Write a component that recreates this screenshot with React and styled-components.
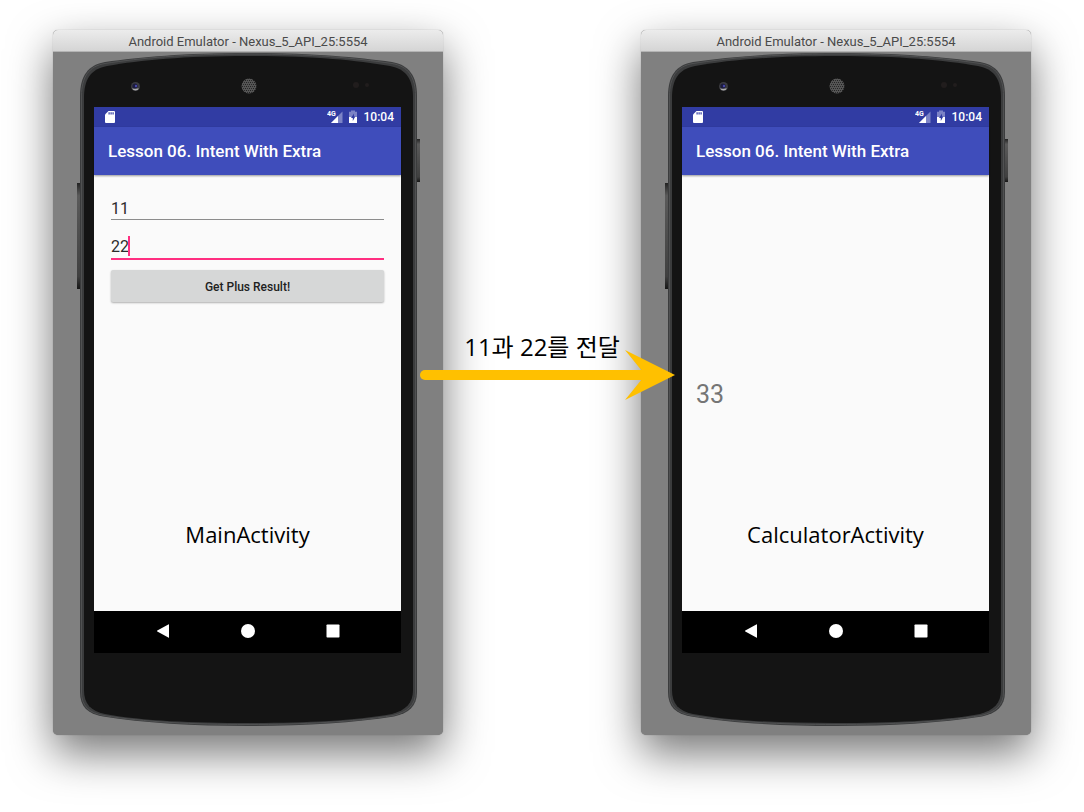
import React from "react";
import styled, { createGlobalStyle } from "styled-components";

const GlobalStyle = createGlobalStyle`
  *, *::before, *::after { box-sizing: border-box; }
  body {
    margin: 0;
    background: #fff;
    font-family: Roboto, "Liberation Sans", sans-serif;
    overflow-x: hidden;
  }
`;

const Page = styled.main`
  display: flex;
  justify-content: center;
  align-items: flex-start;
  padding: 30px 53px 76px;
`;

const EmulatorWindow = styled.section`
  flex: 1 1 390px;
  max-width: 390px;
  min-width: 300px;
  border-radius: 5px;
  background: #808080;
  box-shadow: 0 18px 44px rgba(0, 0, 0, 0.54), 0 0 1px rgba(0, 0, 0, 0.4);
`;

const TitleBar = styled.header`
  height: 22px;
  border-bottom: 1px solid #b4b4b4;
  border-radius: 5px 5px 0 0;
  background: linear-gradient(#ececec, #d5d5d5);
  color: #4a4a4a;
  font-size: 13px;
  line-height: 23px;
  text-align: center;
  white-space: nowrap;
`;

const Stage = styled.div`
  position: relative;
  padding: 55px 42px 82px 41px;
`;

const BodyArt = styled.svg`
  position: absolute;
  inset: 0;
  width: 100%;
  height: 100%;
`;

const Screen = styled.div`
  position: relative;
  display: flex;
  flex-direction: column;
  background: #fafafa;
`;

const StatusBar = styled.div`
  display: flex;
  align-items: center;
  height: 20px;
  padding: 0 7px 0 11px;
  background: #313ca3;
  color: #fff;
  font-size: 12px;
  font-weight: 500;
  line-height: 20px;
`;

const StatusIcons = styled.div`
  display: flex;
  align-items: center;
  gap: 5px;
  margin-left: auto;
  margin-right: 6px;
`;

const AppBar = styled.header`
  position: relative;
  height: 48px;
  padding: 0 14px;
  background: #3f4dbb;
  box-shadow: 0 1px 2px rgba(0, 0, 0, 0.4);
`;

const AppTitle = styled.h1`
  margin: 0;
  color: #fff;
  font-size: 17px;
  font-weight: 500;
  line-height: 49px;
  white-space: nowrap;
`;

const Content = styled.div`
  position: relative;
  display: flex;
  flex-direction: column;
  justify-content: ${({ $centered }) => ($centered ? "center" : "flex-start")};
  min-height: 436px;
  padding: ${({ $centered }) => ($centered ? "4px 14px 0" : "20px 17px 0")};
`;

const Form = styled.form`
  display: flex;
  flex-direction: column;
`;

const Field = styled.div`
  position: relative;
  margin-bottom: ${({ $active }) => ($active ? "10px" : "13px")};
`;

const NumberInput = styled.input`
  display: block;
  width: 100%;
  height: ${({ $active }) => ($active ? "27px" : "25px")};
  padding: 2px 0 0;
  border: 0;
  border-bottom: ${({ $active }) => ($active ? "2px solid #ff2e80" : "1px solid #8c8c8c")};
  outline: 0;
  background: transparent;
  color: #2b2b2b;
  font-family: Roboto, sans-serif;
  font-size: 16px;
`;

const Caret = styled.span`
  position: absolute;
  top: 3px;
  left: 17px;
  width: 2px;
  height: 20px;
  background: #ff2e80;
`;

const PlusButton = styled.button`
  height: 32px;
  padding: 1px 0 0;
  border: 0;
  border-radius: 2px;
  background: #d6d7d7;
  box-shadow: 0 1px 2px rgba(0, 0, 0, 0.3);
  color: #212121;
  font-family: Roboto, sans-serif;
  font-size: 12px;
  font-weight: 500;
`;

const Result = styled.output`
  color: #757575;
  font-size: 25px;
  line-height: 32px;
`;

const Caption = styled.p`
  position: absolute;
  right: 0;
  bottom: 61px;
  left: 0;
  margin: 0;
  color: #000;
  font-family: "Open Sans", "Noto Sans", sans-serif;
  font-size: 22px;
  line-height: 32px;
  text-align: center;
`;

const NavBar = styled.nav`
  display: flex;
  justify-content: center;
  gap: 69px;
  height: 42px;
  padding-bottom: 2px;
  background: #000;
`;

const NavButton = styled.button`
  display: flex;
  align-items: center;
  padding: 0;
  border: 0;
  background: none;
`;

const Transfer = styled.div`
  position: relative;
  z-index: 1;
  flex: 1 1 198px;
  max-width: 198px;
  padding-top: 301px;
`;

const TransferLabel = styled.p`
  margin: 0;
  color: #000;
  font-family: "Open Sans", "Noto Sans CJK KR", sans-serif;
  font-size: 24px;
  line-height: 32px;
  text-align: center;
  white-space: nowrap;
`;

const Arrow = styled.div`
  position: absolute;
  top: 320px;
  right: -34px;
  left: -23px;
  display: flex;
  align-items: center;
`;

const Shaft = styled.div`
  flex: 1;
  height: 10px;
  margin-right: -18px;
  border-radius: 5px 0 0 5px;
  background: #ffc000;
`;

function PhoneBody({ id }) {
  const outline =
    "M195 1C130 1 88 5 52 10C35 13 27 24 27 44V640C27 655 35 662 50 664.500C90 671 140 674 195 674C250 674 300 671 341 664.500C356 661 364 654 364 640V44C364 24 356 13 339 10C302 5 260 1 195 1Z";
  return (
    <BodyArt viewBox="0 0 390 683" preserveAspectRatio="none" aria-hidden="true">
      <defs>
        <linearGradient id={`${id}-key`} x1="0" y1="0" x2="0" y2="1">
          <stop offset="0" stopColor="#222" />
          <stop offset=".12" stopColor="#5a5a5a" />
          <stop offset=".88" stopColor="#404040" />
          <stop offset="1" stopColor="#161616" />
        </linearGradient>
        <pattern id={`${id}-mesh`} width="4" height="4" patternUnits="userSpaceOnUse">
          <rect width="4" height="4" fill="#555" />
          <rect width="1" height="1" fill="#222" />
          <rect x="2" width="1" height="1" fill="#2c2c2c" />
          <rect x="1" y="2" width="1" height="1" fill="#222" />
          <rect x="3" y="2" width="1" height="1" fill="#2c2c2c" />
        </pattern>
      </defs>
      <rect x="24" y="131" width="4" height="106" fill={`url(#${id}-key)`} />
      <rect x="363" y="87" width="4" height="43" fill={`url(#${id}-key)`} />
      <path d={outline} fill="#3b3c3d" />
      <path
        d="M195 2C130 2 88 6 52 11.500C36 14 28.500 25 28.500 44V640C28.500 654 36 661 51 663.500C90 670 140 672.500 195 672.500C250 672.500 300 670 340 663.500C355 660 362.500 653 362.500 640V44C362.500 25 355 14 339 11.500C302 6 260 2 195 2Z"
        fill="none"
        stroke="#505152"
        strokeWidth="1"
      />
      <path
        d="M195 4C130 4 88 8 54 14C38 17 31 27 31 46V638C31 652 38 659 52 662C90 669 140 671 195 671C250 671 300 669 339 662C353 658 360 651 360 638V46C360 27 353 17 337 14C302 8 260 4 195 4Z"
        fill="#141414"
      />
      <circle cx="82.500" cy="34.500" r="4.500" fill="#3c3c40" />
      <path d="M79 36.500a4 4 0 0 0 7 0z" fill="#aaa" />
      <circle cx="82" cy="34" r="2.600" fill="#1b1b3c" />
      <circle cx="83" cy="34" r="1.200" fill="#4747a8" />
      <circle cx="196" cy="34" r="7.500" fill={`url(#${id}-mesh)`} />
      <circle cx="303" cy="33" r="3" fill="#211d1d" />
      <circle cx="314" cy="33" r="2" fill="#211d1d" />
    </BodyArt>
  );
}

function SdCard() {
  return (
    <svg width="10" height="13" viewBox="0 0 10 13" aria-hidden="true">
      <path d="M3.500 0H9Q10 0 10 1V11Q10 12 9 12H1Q0 12 0 11V3.500Z" fill="#fff" />
      <path d="M3.500 1.200h1.200v2.300h-1.200zM5.500 1.200h1.200v2.300h-1.200zM7.500 1.200h1.200v2.300h-1.200z" fill="#313ca3" />
    </svg>
  );
}

function Signal() {
  return (
    <svg width="16" height="14" viewBox="0 0 16 14" aria-label="4G">
      <path d="M15.500 1.500V13H4Z" fill="#7c83c6" />
      <path d="M11 6V13H4Z" fill="#fff" />
      <text x="0" y="6" fill="#fff" fontFamily="Roboto, sans-serif" fontSize="7" fontWeight="700">
        4G
      </text>
    </svg>
  );
}

function Battery() {
  return (
    <svg width="10" height="14" viewBox="0 0 10 14" aria-hidden="true">
      <path d="M3 .500h4v1.300h2V7H1V1.800h2z" fill="#7c83c6" />
      <path d="M1 7h8v6H1z" fill="#fff" />
      <path d="M6 3.500 3 8h1.800v3L7.300 6.500H6z" fill="#313ca3" />
    </svg>
  );
}

function Emulator({ id, centered, caption, children }) {
  return (
    <EmulatorWindow>
      <TitleBar>Android Emulator - Nexus_5_API_25:5554</TitleBar>
      <Stage>
        <PhoneBody id={id} />
        <Screen>
          <StatusBar>
            <SdCard />
            <StatusIcons>
              <Signal />
              <Battery />
            </StatusIcons>
            <span>10:04</span>
          </StatusBar>
          <AppBar>
            <AppTitle>Lesson 06. Intent With Extra</AppTitle>
          </AppBar>
          <Content $centered={centered}>
            {children}
            <Caption>{caption}</Caption>
          </Content>
          <NavBar>
            <NavButton type="button" aria-label="Back">
              <svg width="16" height="14" viewBox="0 0 16 14">
                <path d="M14 .500V13.500Q14 14 13.300 13.600L2.300 7.500Q1.600 7 2.300 6.500L13.300.400Q14 0 14 .500Z" fill="#fff" />
              </svg>
            </NavButton>
            <NavButton type="button" aria-label="Home">
              <svg width="16" height="14" viewBox="0 0 16 14">
                <circle cx="8" cy="7" r="7" fill="#fff" />
              </svg>
            </NavButton>
            <NavButton type="button" aria-label="Overview">
              <svg width="16" height="14" viewBox="0 0 16 14">
                <rect x="1.500" y=".500" width="13" height="13" rx=".800" fill="#fff" />
              </svg>
            </NavButton>
          </NavBar>
        </Screen>
      </Stage>
    </EmulatorWindow>
  );
}

export default function App() {
  return (
    <>
      <GlobalStyle />
      <Page>
        <Emulator id="main" caption="MainActivity">
          <Form onSubmit={(event) => event.preventDefault()}>
            <Field>
              <NumberInput aria-label="First number" inputMode="numeric" defaultValue="11" />
            </Field>
            <Field $active>
              <NumberInput $active aria-label="Second number" inputMode="numeric" defaultValue="22" />
              <Caret />
            </Field>
            <PlusButton type="submit">Get Plus Result!</PlusButton>
          </Form>
        </Emulator>
        <Transfer>
          <TransferLabel>11과 22를 전달</TransferLabel>
          <Arrow>
            <Shaft />
            <svg width="50" height="50" viewBox="0 0 50 50" aria-hidden="true">
              <path d="M0 0 50 25 0 50 17 29V21Z" fill="#ffc000" />
            </svg>
          </Arrow>
        </Transfer>
        <Emulator id="calculator" centered caption="CalculatorActivity">
          <Result>33</Result>
        </Emulator>
      </Page>
    </>
  );
}
